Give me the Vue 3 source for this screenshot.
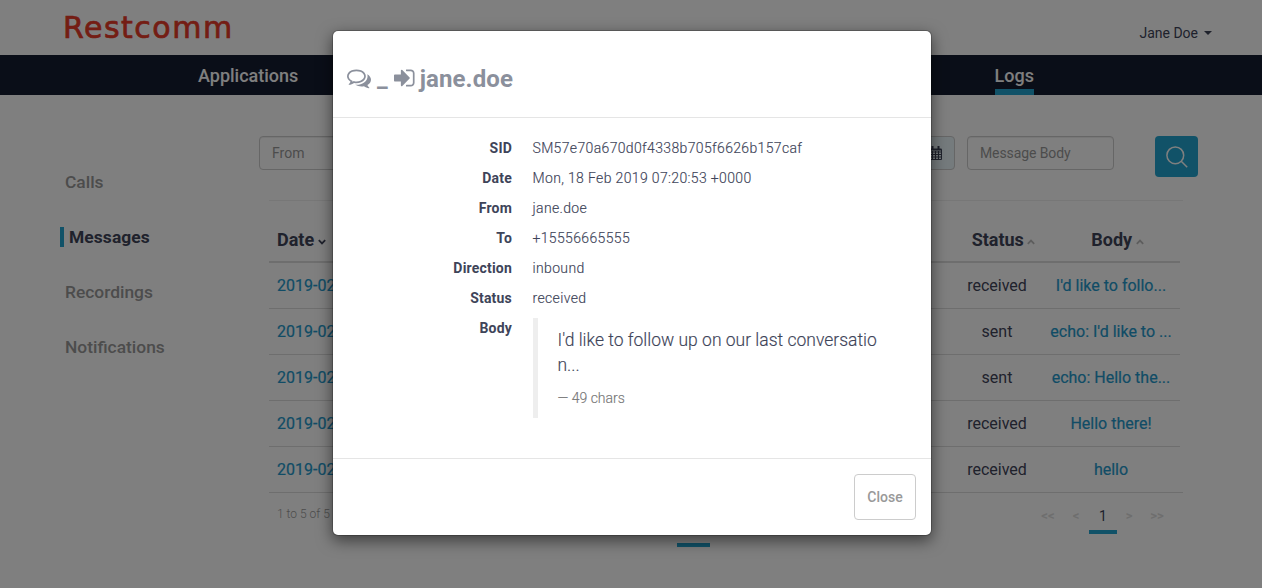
<script setup>
const menu = ['Calls', 'Messages', 'Recordings', 'Notifications']
const rows = [
  { date: '2019-02-18', status: 'received', body: "I'd like to follo..." },
  { date: '2019-02-18', status: 'sent', body: "echo: I'd like to ..." },
  { date: '2019-02-18', status: 'sent', body: 'echo: Hello the...' },
  { date: '2019-02-18', status: 'received', body: 'Hello there!' },
  { date: '2019-02-18', status: 'received', body: 'hello' },
]
const details = [
  ['SID', 'SM57e70a670d0f4338b705f6626b157caf'],
  ['Date', 'Mon, 18 Feb 2019 07:20:53 +0000'],
  ['From', 'jane.doe'],
  ['To', '+15556665555'],
  ['Direction', 'inbound'],
  ['Status', 'received'],
]
</script>

<template>
  <div class="screen">
    <header class="top">
      <div class="logo">Restcomm</div>
      <div class="user">Jane Doe <i class="caret"></i></div>
    </header>
    <nav class="nav">
      <a class="nav-item">Applications</a>
      <a class="nav-item active">Logs</a>
    </nav>

    <div class="content">
      <aside class="side">
        <a v-for="m in menu" :key="m" :class="['side-item', { current: m === 'Messages' }]"><span>{{ m }}</span></a>
      </aside>

      <main class="main">
        <div class="filters">
          <div class="field from">From</div>
          <div class="addon">
            <svg width="13" height="14" viewBox="0 0 13 14" fill="none" stroke="currentColor">
              <path d="M.5 3.5h12v10H.5zM.5 6h12M.5 8.5h12M.5 11h12M3.5 5v8M6.5 5v8M9.5 5v8" stroke-width="1" />
              <path d="M.5 3.5h12" stroke-width="2" />
              <path d="M3.5 0v4M9.5 0v4" stroke-width="2" />
            </svg>
          </div>
          <div class="field message">Message Body</div>
          <button class="search">
            <svg width="22" height="22" viewBox="0 0 22 22" fill="none" stroke="currentColor" stroke-width="1.5">
              <circle cx="9.3" cy="9.3" r="8.4" />
              <path d="M15.2 15.2l6 6" />
            </svg>
          </button>
        </div>

        <div class="grid">
          <div class="row head">
            <div class="date">Date
              <svg class="sort" width="8" height="6" viewBox="0 0 8 6"><path d="M.8 1.2L4 4.4l3.2-3.2" /></svg>
            </div>
            <div class="cell">Status
              <svg class="sort dim" width="8" height="6" viewBox="0 0 8 6"><path d="M.8 4.8L4 1.6l3.2 3.2" /></svg>
            </div>
            <div class="cell">Body
              <svg class="sort dim" width="8" height="6" viewBox="0 0 8 6"><path d="M.8 4.8L4 1.6l3.2 3.2" /></svg>
            </div>
          </div>
          <div v-for="(r, i) in rows" :key="i" class="row">
            <div class="date link">{{ r.date }}</div>
            <div class="cell">{{ r.status }}</div>
            <div class="cell link">{{ r.body }}</div>
          </div>
          <div class="foot">
            <span class="count">1 to 5 of 5</span>
            <div class="pager">
              <span>&lt;&lt;</span><span>&lt;</span><span class="on">1</span><span>&gt;</span><span>&gt;&gt;</span>
            </div>
          </div>
        </div>
      </main>
    </div>
    <div class="mark"></div>

    <div class="backdrop">
      <section class="modal">
        <h3 class="modal-head">
          <svg class="ic-comments" width="24" height="24" viewBox="0 0 1792 1792" fill="currentColor"><path d="M704 384q-153 0-286 52t-211.5 141-78.5 191q0 82 53 158t149 132l97 56-35 84q34-20 62-39l44-31 53 10q78 14 153 14 153 0 286-52t211.5-141 78.5-191-78.5-191-211.5-141-286-52zm0-128q191 0 353.5 68.5t256.5 186.5 94 257-94 257-256.5 186.5-353.5 68.5q-86 0-176-16-124 88-278 128-36 9-86 16h-3q-11 0-20.5-8t-11.5-21q-1-3-1-6.5t.5-6.5 2-6l2.5-5 3.5-5.5 4-5 4.5-5 4-4.5q5-6 23-25t26-29.5 22.5-29 25-38.5 20.5-44q-124-72-195-177t-71-224q0-139 94-257t256.5-186.5 353.5-68.5zm822 1169q10 24 20.5 44t25 38.5 22.5 29 26 29.5 23 25q1 1 4 4.5t4.5 5 4 5 3.5 5.5l2.5 5 2 6 .5 6.5-1 6.5q-3 14-13 22t-22 7q-50-7-86-16-154-40-278-128-90 16-176 16-271 0-472-132 58 4 88 4 161 0 309-45t264-129q125-92 192-212t67-254q0-77-23-152 129 71 204 178t75 230q0 120-71 224.5t-195 176.5z" /></svg>
          <span class="under">_</span>
          <svg class="ic-in" width="21" height="24" viewBox="128 0 1568 1792" fill="currentColor"><path d="M1312 896q0 26-19 45l-544 544q-19 19-45 19t-45-19-19-45v-288h-448q-26 0-45-19t-19-45v-384q0-26 19-45t45-19h448v-288q0-26 19-45t45-19 45 19l544 544q19 19 19 45zm352-352v704q0 119-84.5 203.5t-203.5 84.5h-320q-13 0-22.5-9.5t-9.5-22.5q0-4-1-20t-.5-26.5 3-23.5 10-19.5 20.5-6.5h320q66 0 113-47t47-113v-704q0-66-47-113t-113-47h-312l-11.5-1-11.5-3-8-5.5-7-9-2-13.5q0-4-1-20t-.5-26.5 3-23.5 10-19.5 20.5-6.5h320q119 0 203.5 84.5t84.5 203.5z" /></svg>
          <span class="who">jane.doe</span>
        </h3>
        <dl class="details">
          <template v-for="[k, v] in details" :key="k">
            <dt>{{ k }}</dt>
            <dd>{{ v }}</dd>
          </template>
          <dt>Body</dt>
          <dd>
            <blockquote>
              <p>I'd like to follow up on our last conversatio<br>n...</p>
              <small>— 49 chars</small>
            </blockquote>
          </dd>
        </dl>
        <footer class="modal-foot"><button class="close">Close</button></footer>
      </section>
    </div>
  </div>
</template>

<style>
body { margin: 0; }
</style>

<style scoped>
* { box-sizing: border-box; }
.screen {
  position: relative;
  height: 588px;
  overflow: hidden;
  background: #fff;
  color: #3e4459;
  font-family: Roboto, "Liberation Sans", sans-serif;
  font-size: 14px;
}
.top {
  height: 55px;
  display: flex;
  justify-content: space-between;
  padding: 0 50px 0 62px;
}
.logo {
  font: 30px/56px "DejaVu Sans", sans-serif;
  letter-spacing: 1.5px;
  padding-left: 1px;
  -webkit-text-stroke: .7px currentColor;
  color: #e83a28;
}
.user {
  display: flex;
  align-items: center;
  padding-top: 11px;
}
.caret {
  margin-left: 6px;
  border: 4px solid transparent;
  border-top-color: currentColor;
  border-bottom: 0;
}
.nav {
  height: 40px;
  display: flex;
  justify-content: space-between;
  padding: 0 228px 0 198px;
  background: #141c30;
}
.nav-item {
  height: 40px;
  line-height: 41px;
  font-size: 18px;
  font-weight: 500;
  color: #fff;
}
.nav-item.active { border-bottom: 6px solid #22a5d0; }
.content {
  display: flex;
  height: 448px;
}
.side {
  width: 259px;
  padding: 77px 0 0 60px;
}
.side-item {
  display: block;
  height: 20px;
  margin-bottom: 35px;
  padding-left: 5px;
  line-height: 21px;
  font-size: 17.4px;
  font-weight: 500;
  color: #999;
}
.side-item:first-child, .side-item:nth-child(n) { padding-top: 0; }
.side-item.current {
  border-left: 4px solid #22a5d0;
  font-weight: 700;
  letter-spacing: .1px;
  color: #3e4459;
}
.main { padding-top: 41px; }
.filters {
  display: flex;
  align-items: flex-start;
  height: 64px;
}
.field {
  height: 34px;
  border: 1px solid #ccc;
  border-radius: 4px;
  padding-left: 12px;
  line-height: 32px;
  color: #999;
  box-shadow: inset 0 1px 1px rgba(0, 0, 0, .075);
}
.from { width: 147px; }
.message { width: 147px; letter-spacing: -.1px; }
.addon {
  width: 39px;
  height: 34px;
  margin: 0 12px 0 510px;
  display: flex;
  align-items: center;
  justify-content: center;
  border: 1px solid #ccc;
  border-radius: 0 4px 4px 0;
  background: #eaf7fb;
}
.search {
  width: 43px;
  height: 41px;
  margin-left: 41px;
  padding: 0;
  display: flex;
  align-items: center;
  justify-content: center;
  border: 0;
  border-radius: 4px;
  background: #22a5d0;
  color: #fff;
}
.grid {
  width: 914px;
  margin-left: 10px;
  border-top: 1px solid #eee;
}
.row {
  width: 911px;
  height: 46px;
  display: grid;
  grid-template-columns: 1fr 90px 138px;
  align-items: center;
  border-bottom: 1px solid #ddd;
  font-size: 16px;
}
.row:nth-last-child(2) { width: 914px; padding-right: 3px; }
.head {
  height: 62px;
  padding-top: 16px;
  border-bottom-width: 2px;
  font-size: 18px;
  font-weight: 700;
}
.date { padding-left: 8px; }
.cell { text-align: center; white-space: nowrap; }
.head .cell { padding-left: 13px; }
.link {
  color: #2299cc;
  -webkit-text-stroke: .2px currentColor;
}
.sort {
  margin-left: -1px;
  vertical-align: 1px;
  fill: none;
  stroke: currentColor;
  stroke-width: 1.8;
}
.dim { color: #bbb; }
.foot {
  display: flex;
  justify-content: space-between;
  padding: 0 10px 0 8px;
}
.count {
  line-height: 42px;
  font-size: 12px;
  font-weight: 300;
  color: #999;
}
.pager {
  display: grid;
  grid-template-columns: 30px 26px 28px 24px 32px;
  height: 41px;
  text-align: center;
  line-height: 46px;
  color: #ddd;
}
.pager span { height: 41px; font-weight: 700; font-size: 13px; }
.pager .on {
  border-bottom: 4px solid #22a5d0;
  color: #3e4459;
  font-size: 14px;
  font-weight: 400;
}
.mark {
  width: 33px;
  height: 4px;
  margin-left: 677px;
  background: #22a5d0;
}
.backdrop {
  position: absolute;
  inset: 0;
  padding: 30px 0 0 332px;
  background: rgba(0, 0, 0, .5);
}
.modal {
  width: 600px;
  height: 506px;
  border: 1px solid rgba(0, 0, 0, .2);
  border-radius: 6px;
  background: #fff;
  background-clip: padding-box;
  box-shadow: 0 5px 15px rgba(0, 0, 0, .5);
}
.modal-head {
  display: flex;
  align-items: center;
  height: 87px;
  margin: 0;
  padding: 8px 15px 0 14px;
  border-bottom: 1px solid #e5e5e5;
  font-size: 24px;
  font-weight: 700;
  color: #8b909c;
}
.under { margin: 0 6px 0 6px; }
.ic-in { margin-right: 5px; }
.who { padding-top: 1px; letter-spacing: .1px; }
.details {
  display: grid;
  grid-template-columns: 179px 1fr;
  column-gap: 20px;
  grid-auto-rows: min-content;
  height: 340px;
  margin: 0;
  padding-top: 20px;
  line-height: 20px;
}
dt { height: 30px; text-align: right; font-weight: 700; letter-spacing: .2px; }
dd {
  margin: 0;
  padding-left: .5px;
  font-weight: 300;
  letter-spacing: .35px;
  -webkit-text-stroke: .15px currentColor;
}
blockquote {
  height: 100px;
  margin: 0;
  padding: 10px 20px;
  border-left: 5px solid #eee;
  letter-spacing: 0;
}
blockquote p {
  margin: 0 0 10px;
  font-size: 17.5px;
  line-height: 25px;
}
blockquote small { display: block; font-size: 14px; color: #777; }
.modal-foot {
  display: flex;
  justify-content: flex-end;
  padding: 15px;
  border-top: 1px solid #e5e5e5;
}
.close {
  width: 62px;
  height: 46px;
  padding: 0;
  border: 1px solid #ccc;
  border-radius: 4px;
  background: #fff;
  font: 500 14px Roboto, sans-serif;
  color: #999;
}
</style>
